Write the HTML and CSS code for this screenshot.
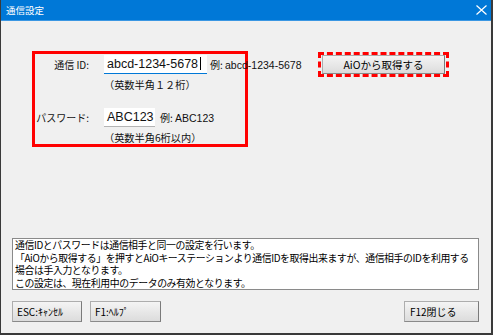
FILE: index.html
```html
<!DOCTYPE html>
<html lang="ja">
<head>
    <meta charset="UTF-8">
    <meta name="viewport" content="width=device-width, initial-scale=1.0">
    <title>通信設定</title>
    <link rel="stylesheet" href="styles.css">
</head>
<body>
    <div class="window">
        <!-- Title bar -->
        <div class="titlebar">
            <span class="title">通信設定</span>
            <svg class="close" width="11" height="10" viewBox="0 0 11 10">
                <path d="M0.5 0.5 L10.5 9.5 M10.5 0.5 L0.5 9.5" stroke="#fff" stroke-width="1.2" fill="none"/>
            </svg>
        </div>

        <div class="content">
            <div class="top">
                <!-- ID / password fields -->
                <div class="idbox">
                    <div class="field">
                        <span class="label">通信 ID:</span>
                        <span class="input input-id">abcd-1234-5678<span class="caret"></span></span>
                        <span class="example">例: <span class="example-val">abcd-1234-5678</span></span>
                    </div>
                    <div class="hint">（英数半角１２桁）</div>
                    <div class="field field-pass">
                        <span class="label">パスワード:</span>
                        <span class="input input-pass">ABC123</span>
                        <span class="example example-pass">例: <span class="example-val">ABC123</span></span>
                    </div>
                    <div class="hint">（英数半角6桁以内）</div>
                </div>

                <!-- Get from AiO -->
                <div class="aio">
                    <button class="btn btn-aio">AiOから取得する</button>
                </div>
            </div>

            <div class="memo">通信IDとパスワードは通信相手と同一の設定を行います。<br>「AiOから取得する」を押すとAiOキーステーションより通信IDを取得出来ますが、通信相手のIDを利用する<br>場合は手入力となります。<br>この設定は、現在利用中のデータのみ有効となります。</div>

            <div class="buttons">
                <button class="btn btn-esc">ESC:ｷｬﾝｾﾙ</button>
                <button class="btn btn-help">F1:ﾍﾙﾌﾟ</button>
                <button class="btn btn-close">F12閉じる</button>
            </div>
        </div>
    </div>
</body>
</html>
```

FILE: styles.css
```css
body {
    margin: 0;
    font-family: "Noto Sans CJK JP", sans-serif;
    background: #f0f0f0;
}

.window {
    width: 493px;
    height: 335px;
    box-sizing: border-box;
    display: flex;
    flex-direction: column;
    background: #f0f0f0;
    border-left: 1px solid #3a3a3a;
    border-right: 2px solid #3a3a3a;
    border-bottom: 2px solid #3a3a3a;
}

.titlebar {
    height: 20px;
    flex: none;
    display: flex;
    align-items: center;
    justify-content: space-between;
    padding: 0 4px 0 5px;
    background: #0078d7;
    border-bottom: 1px solid #3b97e3;
}

.title {
    color: #fff;
    font-size: 9.5px;
    line-height: 20px;
}

.close {
    display: block;
}

.content {
    flex: 1;
    display: flex;
    flex-direction: column;
    padding: 30px 12px 11px 11px;
}

.top {
    display: flex;
    align-items: flex-start;
}

.idbox {
    margin-left: 20px;
    width: 216px;
    height: 96px;
    box-sizing: border-box;
    border: 3px solid #ff0000;
    white-space: nowrap;
}

.field {
    display: flex;
    align-items: center;
    height: 19px;
    margin-top: 1px;
}

.field-pass {
    margin-top: 16px;
}

.label {
    width: 54px;
    flex: none;
    text-align: right;
    font-size: 10px;
    color: #111;
}

.input {
    margin-left: 15px;
    height: 18px;
    box-sizing: content-box;
    background: #fff;
    font-family: "Liberation Sans", sans-serif;
    font-size: 12.5px;
    line-height: 18px;
    color: #111;
    padding-left: 3px;
    flex: none;
}

.input-id {
    width: 100px;
    border-bottom: 1px solid #0078d7;
}

.caret {
    display: inline-block;
    width: 1px;
    height: 13px;
    background: #000;
    vertical-align: -2px;
    margin-left: 2px;
}

.input-pass {
    width: 48px;
    border-bottom: 1px solid #b4b4b4;
}

.example {
    margin-left: 3px;
    font-size: 10px;
    color: #111;
}

.example-pass {
    margin-left: 5px;
}

.example-val {
    font-family: "Liberation Sans", sans-serif;
    font-size: 10.5px;
}

.hint {
    padding-left: 69px;
    margin-top: 4px;
    font-size: 10.2px;
    line-height: 14px;
    color: #111;
}

.aio {
    margin-left: 70px;
    margin-top: 1px;
    padding: 0 1px;
    border: 3px dashed #ff0000;
}

.btn {
    display: block;
    margin: 0;
    font-family: "Noto Sans CJK JP", sans-serif;
    font-size: 10px;
    color: #000;
    background: linear-gradient(#f4f4f4, #dcdcdc);
    border: 1px solid #adadad;
    border-right-color: #7a7a7a;
    border-bottom-color: #8a8a8a;
    padding: 0 0 0 4px;
    text-align: left;
}

.btn-aio {
    width: 123px;
    height: 19px;
    text-align: center;
    padding: 0;
    font-size: 10.5px;
}

.memo {
    margin-top: auto;
    height: 50px;
    border: 1px solid #8a8a8a;
    background: #fff;
    padding: 0 2px;
    font-size: 9.9px;
    line-height: 12.5px;
    letter-spacing: -0.4px;
    white-space: nowrap;
    overflow: hidden;
    color: #000;
}

.buttons {
    display: flex;
    margin-top: 11px;
    height: 21px;
}

.btn-esc {
    width: 70px;
}

.btn-help {
    width: 71px;
    margin-left: 8px;
}

.btn-close {
    width: 75px;
    margin-left: auto;
    padding-left: 5px;
}
```
